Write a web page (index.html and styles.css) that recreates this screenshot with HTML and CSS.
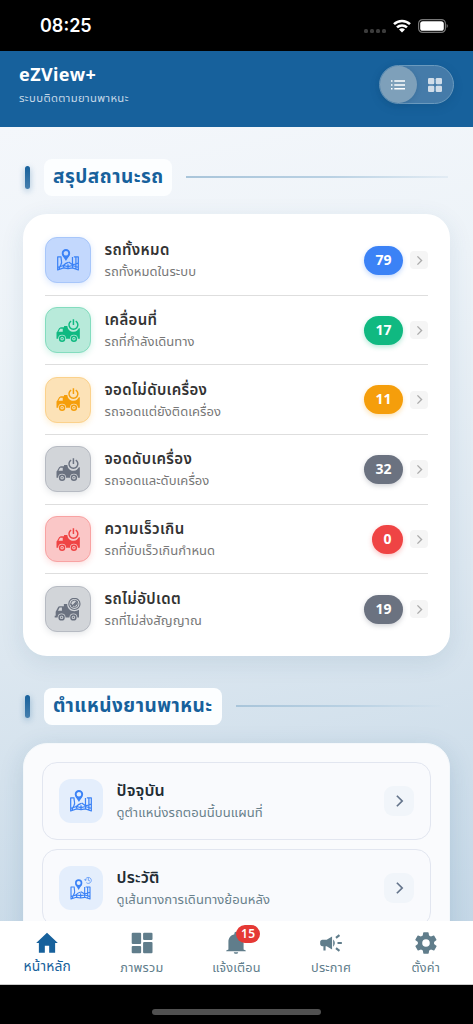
FILE: index.html
```html
<!DOCTYPE html>
<html lang="th">
<head>
<meta charset="utf-8">
<meta name="viewport" content="width=device-width, initial-scale=1">
<title>eZView+</title>
<link rel="stylesheet" href="styles.css">
</head>
<body>
<svg class="defs" width="0" height="0">
  <symbol id="map" viewBox="0 0 64 64">
    <g fill="none" stroke="currentColor" stroke-width="3.600" stroke-linejoin="round">
      <path d="M13 23H2v38l17-6 13 2 13-2 17 6V23H49M12 24c-1 9 4 13 0 20-2 5-4 7-6 15M45 23v32M55 24v34M17 46l4 9M33 39c-8 2-12 6-15 10M34 38l11 8 17-5M3 53l16-5 13 3 13-3 16 5M32 44v12"/>
      <circle cx="26" cy="12.500" r="9.500" stroke-width="5.500"/>
    </g>
    <path d="M15 17c2 6 6 10 11 18 5-8 9-12 11-18-5 7-17 7-22 0z" fill="currentColor"/>
  </symbol>
  <symbol id="truck" viewBox="0 0 72 70">
    <path fill="currentColor" fill-rule="evenodd" d="M24 21h10c1 12 10 19 20 18 7-1 12-5 15-11h3v32h-6a12 12 0 0 0-24 0H30a12 12 0 0 0-24 0H1V41l2-2 6-11 5-3h10zm-12 9-5 9h13v-9z"/>
    <g fill="none" stroke="currentColor" stroke-width="4.500">
      <circle cx="18" cy="60" r="7.500"/><circle cx="54" cy="60" r="7.500"/>
      <path d="M45.500 6.500a13.500 13.500 0 1 0 14 0M52.500 1v17"/>
    </g>
    <g fill="currentColor"><circle cx="18" cy="60" r="2.500"/><circle cx="54" cy="60" r="2.500"/></g>
  </symbol>
  <symbol id="truck-off" viewBox="0 0 80 70">
    <path fill="currentColor" fill-rule="evenodd" d="M29 18h10c0 14 10 22 22 22 5 0 10-1 14-4v23h-5a12 12 0 0 0-24 0H34a12 12 0 0 0-24 0H1v-5h3V42l8-15 4-2h13zm-13 11-5 10h12V29z"/>
    <g fill="none" stroke="currentColor">
      <g stroke-width="4.500"><circle cx="22" cy="59" r="7.500"/><circle cx="58" cy="59" r="7.500"/></g>
      <circle cx="61" cy="18" r="17" stroke-width="3.500"/>
      <circle cx="61" cy="18" r="11" stroke-width="3"/>
      <path d="m52 27 18-18M49 18l7 6M60 25l9-9" stroke-width="4"/>
    </g>
    <g fill="currentColor"><circle cx="22" cy="59" r="2.500"/><circle cx="58" cy="59" r="2.500"/></g>
  </symbol>
  <symbol id="map-history" viewBox="0 0 66 70">
    <g fill="none" stroke="currentColor" stroke-width="3.400" stroke-linejoin="round">
      <path d="M14 32H3v36l16-5 13 2 12-2 16 5V32H47M13 33c-1 8 3 12 0 18-2 5-4 7-6 15M44 32v31M53 33v32M18 53l3 10M32 47c-7 2-11 5-14 9M33 46l11 7 16-5M4 60l15-4 13 2 12-2 15 4M32 51v13"/>
      <circle cx="26" cy="20" r="8.500" stroke-width="5"/>
      <g stroke-width="2"><path d="M46 11a9 9 0 1 1 3 8M43 9l3 4 4-3M55 5v7l5 2"/></g>
    </g>
    <path d="M16 24c2 6 6 9 10 17 4-8 8-11 10-17-5 6-15 6-20 0z" fill="currentColor"/>
  </symbol>
  <symbol id="chev" viewBox="0 0 10 16"><path d="m2 2 6 6-6 6" fill="none" stroke="currentColor" stroke-width="2"/></symbol>
</svg>

<div class="statusbar">
  <time class="clock">08:25</time>
  <div class="signals">
    <span class="dots"><i></i><i></i><i></i><i></i></span>
    <svg width="18" height="14" viewBox="0 0 18 14"><g fill="none" stroke="#fff" stroke-width="2.500"><path d="M1 5.200a11.500 11.500 0 0 1 16 0"/><path d="M4 8.400a7.200 7.200 0 0 1 10 0"/></g><path d="M6 10.600a4.300 4.300 0 0 1 6 0L9 13.600z" fill="#fff"/></svg>
    <svg width="31" height="14" viewBox="0 0 31 14"><rect x=".6" y=".6" width="26.800" height="12.800" rx="4" fill="none" stroke="#777" stroke-width="1.200"/><rect x="2.200" y="2.200" width="23.600" height="9.600" rx="2.600" fill="#fff"/><path d="M28.600 5v4c1.600-.5 1.600-3.500 0-4z" fill="#777"/></svg>
  </div>
</div>

<header class="header">
  <div>
    <h1 class="brand">eZView+</h1>
    <p class="tagline">ระบบติดตามยานพาหนะ</p>
  </div>
  <div class="toggle">
    <span class="toggle-item active"><svg width="14" height="10" viewBox="0 0 14 10" fill="#fff"><path d="M0 .3h1.500v1.500H0zM0 4.200h1.500v1.500H0zM0 8.100h1.500v1.500H0zM3.300.3H14v1.500H3.300zM3.300 4.200H14v1.500H3.300zM3.300 8.100H14v1.500H3.300z"/></svg></span>
    <span class="toggle-item"><svg width="14" height="14" viewBox="0 0 14 14" fill="#d1dde9"><rect width="6.300" height="6.300" rx="1.300"/><rect x="7.700" width="6.300" height="6.300" rx="1.300"/><rect y="7.700" width="6.300" height="6.300" rx="1.300"/><rect x="7.700" y="7.700" width="6.300" height="6.300" rx="1.300"/></svg></span>
  </div>
</header>

<main class="main">
  <div class="section-head"><span class="bar"></span><h2 class="section-title t1">สรุปสถานะรถ</h2><span class="rule"></span></div>
  <section class="card summary">
    <div class="row blue"><span class="tile"><svg class="i-map"><use href="#map"/></svg></span><div class="copy"><h3>รถทั้งหมด</h3><p>รถทั้งหมดในระบบ</p></div><b class="count">79</b><span class="go"><svg><use href="#chev"/></svg></span></div>
    <div class="row green"><span class="tile"><svg class="i-truck"><use href="#truck"/></svg></span><div class="copy"><h3>เคลื่อนที่</h3><p>รถที่กำลังเดินทาง</p></div><b class="count">17</b><span class="go"><svg><use href="#chev"/></svg></span></div>
    <div class="row amber"><span class="tile"><svg class="i-truck"><use href="#truck"/></svg></span><div class="copy"><h3>จอดไม่ดับเครื่อง</h3><p>รถจอดแต่ยังติดเครื่อง</p></div><b class="count">11</b><span class="go"><svg><use href="#chev"/></svg></span></div>
    <div class="row gray"><span class="tile"><svg class="i-truck"><use href="#truck"/></svg></span><div class="copy"><h3>จอดดับเครื่อง</h3><p>รถจอดและดับเครื่อง</p></div><b class="count">32</b><span class="go"><svg><use href="#chev"/></svg></span></div>
    <div class="row red"><span class="tile"><svg class="i-truck"><use href="#truck"/></svg></span><div class="copy"><h3>ความเร็วเกิน</h3><p>รถที่ขับเร็วเกินกำหนด</p></div><b class="count">0</b><span class="go"><svg><use href="#chev"/></svg></span></div>
    <div class="row gray"><span class="tile"><svg class="i-off"><use href="#truck-off"/></svg></span><div class="copy"><h3>รถไม่อัปเดต</h3><p>รถที่ไม่ส่งสัญญาณ</p></div><b class="count">19</b><span class="go"><svg><use href="#chev"/></svg></span></div>
  </section>

  <div class="section-head second"><span class="bar"></span><h2 class="section-title t2">ตำแหน่งยานพาหนะ</h2><span class="rule"></span></div>
  <section class="card places">
    <div class="place"><span class="place-tile"><svg class="i-map"><use href="#map"/></svg></span><div class="copy"><h3>ปัจจุบัน</h3><p>ดูตำแหน่งรถตอนนี้บนแผนที่</p></div><span class="place-go"><svg><use href="#chev"/></svg></span></div>
    <div class="place"><span class="place-tile"><svg class="i-hist"><use href="#map-history"/></svg></span><div class="copy"><h3>ประวัติ</h3><p>ดูเส้นทางการเดินทางย้อนหลัง</p></div><span class="place-go"><svg><use href="#chev"/></svg></span></div>
  </section>
</main>

<nav class="nav">
  <a class="nav-item current"><svg width="26" height="26" viewBox="0 0 24 24"><path d="M10 21v-6.500h4V21h5.500v-9H22L12 2.500 2 12h2.500v9z"/></svg><span>หน้าหลัก</span></a>
  <a class="nav-item"><svg width="26" height="26" viewBox="0 0 24 24"><g><rect x="2.500" y="2.500" width="8.700" height="10.500" rx="1"/><rect x="13" y="2.500" width="8.700" height="6.700" rx="1"/><rect x="2.500" y="14.800" width="8.700" height="6.700" rx="1"/><rect x="13" y="11" width="8.700" height="10.500" rx="1"/></g></svg><span>ภาพรวม</span></a>
  <a class="nav-item"><svg width="26" height="26" viewBox="0 0 24 24"><path d="M12 22c1.100 0 2-.6 2-1.500h-4c0 .9.900 1.500 2 1.500zm7-4v-7c0-3.400-2-6.200-5.500-7V3a1.500 1.500 0 0 0-3 0v1C7 4.800 5 7.600 5 11v7l-2 1v.6h18V19z"/></svg><b class="badge">15</b><span>แจ้งเตือน</span></a>
  <a class="nav-item"><svg width="26" height="26" viewBox="0 0 24 24"><path d="M18 11v2h4v-2zM16 17.600l3.200 2.400 1.200-1.600-3.200-2.400zM20.400 5.600 19.200 4 16 6.400 17.200 8zM4 9c-1.100 0-2 .9-2 2v2c0 1.100.9 2 2 2h1v4h2v-4h1l5 3V6L8 9zM15.500 12c0-1.300-.6-2.500-1.500-3.300v6.700c.9-.9 1.500-2.100 1.500-3.400z"/></svg><span>ประกาศ</span></a>
  <a class="nav-item"><svg width="26" height="26" viewBox="0 0 24 24"><path d="M19.400 13c0-.3.100-.6.100-1s0-.7-.1-1l2.100-1.600a.5.500 0 0 0 .1-.6l-2-3.500a.5.500 0 0 0-.6-.2l-2.500 1a7.400 7.400 0 0 0-1.700-1l-.4-2.600a.5.500 0 0 0-.5-.4h-4a.5.500 0 0 0-.5.400L9 5.100a7.400 7.400 0 0 0-1.700 1l-2.500-1a.5.500 0 0 0-.6.200l-2 3.500a.5.500 0 0 0 .1.600L4.500 11a8 8 0 0 0 0 2l-2.100 1.600a.5.500 0 0 0-.1.600l2 3.500c.1.200.4.300.6.200l2.500-1c.5.400 1.100.7 1.700 1l.4 2.600c0 .2.200.4.500.4h4c.2 0 .4-.2.500-.4l.4-2.600a7.400 7.400 0 0 0 1.700-1l2.500 1c.2.100.5 0 .6-.2l2-3.500a.5.500 0 0 0-.1-.6zM12 15.500a3.500 3.500 0 1 1 0-7 3.500 3.500 0 0 1 0 7z"/></svg><span>ตั้งค่า</span></a>
</nav>
<footer class="homebar"><span></span></footer>
</body>
</html>
```
FILE: styles.css
```css
* { box-sizing: border-box; }
body { margin: 0; width: 473px; height: 1024px; overflow: hidden; display: flex; flex-direction: column; background: #000; font-family: "Noto Sans", "Noto Sans Thai", sans-serif; }
h1, h2, h3, p { margin: 0; white-space: nowrap; }
.defs { position: absolute; }

.statusbar { height: 51px; flex: none; display: flex; justify-content: space-between; padding: 0 24px 0 40px; background: #000; color: #fff; }
.clock { font: 600 18px/52px Inter, sans-serif; }
.signals { display: flex; align-items: center; padding-top: 1px; }
.signals svg { margin-left: 7px; }
.dots { display: flex; gap: 2px; padding-top: 9px; }
.dots i { width: 4px; height: 4px; border-radius: 1.500px; background: #3c3c3c; }

.header { height: 76px; flex: none; display: flex; justify-content: space-between; padding: 14px 19px 0 19px; background: #17619c; color: #fff; }
.brand { font-size: 18px; line-height: 18px; font-weight: 700; letter-spacing: .4px; }
.tagline { margin-top: 6px; font-size: 11.300px; line-height: 18px; color: #c5d8e7; letter-spacing: .35px; }
.toggle { width: 75px; height: 39px; display: flex; border: 1px solid #6b9abe; border-radius: 20px; background: #457ba9; box-shadow: 0 3px 8px #0a457040; }
.toggle-item { width: 37px; height: 37px; display: grid; place-items: center; border-radius: 50%; }
.toggle-item.active { background: #7ea0ba; box-shadow: 0 1px 5px #164c7540; }

.main { height: 794px; flex: none; overflow: hidden; padding: 31px 23px 0; background: linear-gradient(168deg, #f4f7fb 0%, #edf3f8 25%, #dce7f0 60%, #c5d8e7 100%); }
.section-head { height: 38px; display: flex; align-items: center; padding: 0 2px; }
.bar { width: 5px; height: 23px; margin-right: 14px; border-radius: 3px; background: linear-gradient(#17619c, #467fad); box-shadow: 0 2px 6px #17619c60; }
.section-title { height: 37px; padding: 0 9px; border-radius: 8px; background: #fcfeff; color: #17619c; font-size: 19px; line-height: 35px; font-weight: 700; letter-spacing: .5px; overflow: hidden; }
.t1 { width: 128px; }
.t2 { width: 178px; }
.rule { flex: 1; height: 2px; margin-left: 14px; background: linear-gradient(90deg, #a9c5da, #b9d1e3 55%, #d5e3ee80); }

.card { border-radius: 24px; box-shadow: 0 6px 24px #1e50781a; }
.summary { height: 442px; margin-top: 18px; padding: 12px 22px; background: #fff; }
.row { height: 69.700px; display: flex; align-items: center; border-bottom: 1px solid #dedede; }
.row:last-child { border-bottom: 0; }
.tile { width: 46px; height: 46px; flex: none; display: grid; place-items: center; border: 1px solid; border-radius: 12px; }
.i-map { width: 22px; height: 22px; }
.i-truck { width: 24px; height: 23px; }
.i-off { width: 27px; height: 23px; margin-left: -2px; }
.copy { flex: 1; margin-left: 13.500px; }
.row h3 { color: #333; font-size: 15px; line-height: 22px; font-weight: 600; letter-spacing: .35px; }
.row p { color: #777; font-size: 13px; line-height: 22px; letter-spacing: .06px; }
.count { min-width: 31px; height: 29px; padding: 0 11.500px; border-radius: 15px; background: currentColor; font-size: 14px; line-height: 28px; font-weight: 700; box-shadow: 0 2px 5px var(--glow); -webkit-text-fill-color: #fff; }
.go { width: 18px; height: 18px; margin-left: 7px; display: grid; place-items: center; border-radius: 4px; background: #f5f5f5; color: #aaa; }
.go svg { width: 7px; height: 11px; }
.blue { --c: #3b82f6; --bg: #c3d8fd; --bd: #a7c6fa; --glow: #3b82f650; }
.green { --c: #10b981; --bg: #b8eada; --bd: #83dcbe; --glow: #10b98150; }
.amber { --c: #f59e0b; --bg: #fce2b7; --bd: #fbd18b; --glow: #f59e0b50; }
.gray { --c: #6b7280; --bg: #d2d5d9; --bd: #b6bac2; --glow: #6b728050; }
.red { --c: #ef4444; --bg: #fac7c7; --bd: #f8a2a2; --glow: #ef444450; }
.tile { color: var(--c); background: var(--bg); border-color: var(--bd); box-shadow: 0 2px 6px color-mix(in srgb, var(--c) 18%, transparent); }
.count { color: var(--c); }

.second { margin-top: 31px; }
.places { height: 260px; margin-top: 18px; padding: 18px; background: #fafbfd; border: 1px solid #f4f8fb; box-shadow: 0 6px 24px #1e507826; }
.place { height: 78px; margin-bottom: 9px; padding: 0 16px; display: flex; align-items: center; border: 1px solid #e2e6f0; border-radius: 15px; background: #f9fafd; }
.place-tile { width: 44px; height: 44px; flex: none; display: grid; place-items: center; border-radius: 12px; background: #e4eefc; color: #3b82f6; }
.i-hist { width: 22px; height: 24px; }
.place h3 { color: #222c34; font-size: 16px; line-height: 22px; font-weight: 600; letter-spacing: .15px; }
.place p { color: #68808b; font-size: 13px; line-height: 22px; letter-spacing: .08px; }
.place-go { width: 30px; height: 30px; display: grid; place-items: center; border-radius: 9px; background: #f1f5fa; color: #64748b; }
.place-go svg { width: 9px; height: 14px; }

.nav { height: 64px; flex: none; display: grid; grid-template-columns: repeat(5, 1fr); background: #fff; border-bottom: 1px solid #ccc; }
.nav-item { position: relative; display: flex; flex-direction: column; align-items: center; padding-top: 9px; color: #607d8b; font-size: 12.700px; line-height: 18px; letter-spacing: .2px; white-space: nowrap; }
.nav-item svg { fill: currentColor; }
.nav-item span { margin-top: 2px; }
.current { color: #17619c; font-size: 13.800px; }
.current span { margin-top: 1px; }
.badge { position: absolute; left: 47px; top: 4px; width: 24px; height: 18px; border-radius: 9px; background: #e53935; color: #fff; font-size: 12px; line-height: 17px; font-weight: 600; text-align: center; }
.homebar { height: 39px; flex: none; display: flex; justify-content: center; padding-top: 24px; }
.homebar span { width: 169px; height: 6px; border-radius: 3px; background: #505050; }
```
